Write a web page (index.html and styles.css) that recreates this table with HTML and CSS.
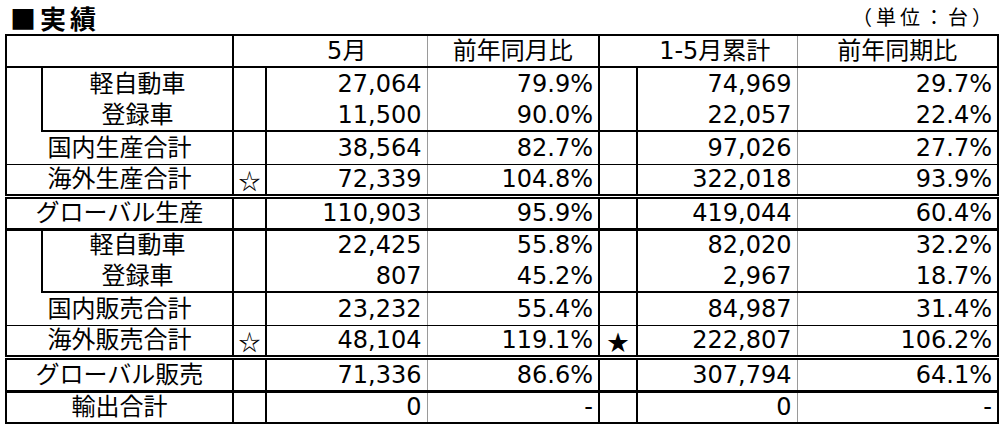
FILE: index.html
```html
<!DOCTYPE html>
<html lang="ja">
<head>
<meta charset="utf-8">
<title>実績</title>
<link rel="stylesheet" href="styles.css">
</head>
<body>
<div class="page">
  <div class="titlebar">
    <h1 class="title">■実績</h1>
    <div class="unit">（単位：台）</div>
  </div>
  <table class="grid">
    <colgroup>
      <col class="w-a"><col class="w-b"><col class="w-c"><col class="w-d">
      <col class="w-e"><col class="w-f"><col class="w-g"><col class="w-h">
    </colgroup>
    <tr class="hd">
      <th colspan="2" class="bk"></th>
      <th colspan="2" class="gr shift">5月</th>
      <th class="bk">前年同月比</th>
      <th colspan="2" class="gr shift">1-5月累計</th>
      <th>前年同期比</th>
    </tr>
    <tr class="r-a">
      <td rowspan="2" class="indent"></td>
      <td class="lbl bk">軽自動車</td>
      <td class="star bk"></td>
      <td class="num gr">27,064</td>
      <td class="num bk">79.9%</td>
      <td class="star bk"></td>
      <td class="num gr">74,969</td>
      <td class="num">29.7%</td>
    </tr>
    <tr class="r-b b-thick">
      <td class="lbl bk">登録車</td>
      <td class="star bk"></td>
      <td class="num gr">11,500</td>
      <td class="num bk">90.0%</td>
      <td class="star bk"></td>
      <td class="num gr">22,057</td>
      <td class="num">22.4%</td>
    </tr>
    <tr class="r-c b-thin">
      <td colspan="2" class="lbl bk">国内生産合計</td>
      <td class="star bk"></td>
      <td class="num gr">38,564</td>
      <td class="num bk">82.7%</td>
      <td class="star bk"></td>
      <td class="num gr">97,026</td>
      <td class="num">27.7%</td>
    </tr>
    <tr class="r-d b-double">
      <td colspan="2" class="lbl bk">海外生産合計</td>
      <td class="star bk">☆</td>
      <td class="num gr">72,339</td>
      <td class="num bk">104.8%</td>
      <td class="star bk"></td>
      <td class="num gr">322,018</td>
      <td class="num">93.9%</td>
    </tr>
    <tr class="r-e b-heavy">
      <td colspan="2" class="lbl bk">グローバル生産</td>
      <td class="star bk"></td>
      <td class="num gr">110,903</td>
      <td class="num bk">95.9%</td>
      <td class="star bk"></td>
      <td class="num gr">419,044</td>
      <td class="num">60.4%</td>
    </tr>
    <tr class="r-f">
      <td rowspan="2" class="indent"></td>
      <td class="lbl bk">軽自動車</td>
      <td class="star bk"></td>
      <td class="num gr">22,425</td>
      <td class="num bk">55.8%</td>
      <td class="star bk"></td>
      <td class="num gr">82,020</td>
      <td class="num">32.2%</td>
    </tr>
    <tr class="r-g b-thick">
      <td class="lbl bk">登録車</td>
      <td class="star bk"></td>
      <td class="num gr">807</td>
      <td class="num bk">45.2%</td>
      <td class="star bk"></td>
      <td class="num gr">2,967</td>
      <td class="num">18.7%</td>
    </tr>
    <tr class="r-h b-thin">
      <td colspan="2" class="lbl bk">国内販売合計</td>
      <td class="star bk"></td>
      <td class="num gr">23,232</td>
      <td class="num bk">55.4%</td>
      <td class="star bk"></td>
      <td class="num gr">84,987</td>
      <td class="num">31.4%</td>
    </tr>
    <tr class="r-i b-double">
      <td colspan="2" class="lbl bk">海外販売合計</td>
      <td class="star bk">☆</td>
      <td class="num gr">48,104</td>
      <td class="num bk">119.1%</td>
      <td class="star bk">★</td>
      <td class="num gr">222,807</td>
      <td class="num">106.2%</td>
    </tr>
    <tr class="r-j b-heavy">
      <td colspan="2" class="lbl bk">グローバル販売</td>
      <td class="star bk"></td>
      <td class="num gr">71,336</td>
      <td class="num bk">86.6%</td>
      <td class="star bk"></td>
      <td class="num gr">307,794</td>
      <td class="num">64.1%</td>
    </tr>
    <tr class="r-k">
      <td colspan="2" class="lbl bk">輸出合計</td>
      <td class="star bk"></td>
      <td class="num gr">0</td>
      <td class="num bk">-</td>
      <td class="star bk"></td>
      <td class="num gr">0</td>
      <td class="num">-</td>
    </tr>
  </table>
</div>
</body>
</html>
```

FILE: styles.css
```css
html, body {
  margin: 0;
  padding: 0;
  background: #fff;
}

body {
  font-family: "DejaVu Sans", "Noto Sans CJK JP", sans-serif;
  color: #000;
}

.page {
  width: 1000px;
  padding-left: 5px;
  box-sizing: border-box;
}

.titlebar {
  display: flex;
  justify-content: space-between;
  align-items: flex-end;
  height: 34px;
  padding-right: 4px;
}

.title {
  margin: 0 0 0 5px;
  font-family: "Noto Sans CJK JP", sans-serif;
  font-weight: 700;
  font-size: 26px;
  line-height: 32px;
  letter-spacing: 4px;
}

.unit {
  font-family: "Noto Sans CJK JP", sans-serif;
  font-size: 20px;
  line-height: 24px;
  letter-spacing: 4px;
  margin-bottom: 5px;
}

.grid {
  border-collapse: collapse;
  table-layout: fixed;
  width: 992px;
  border: 2px solid #000;
  font-size: 24px;
  line-height: 28px;
}

.w-a { width: 36px; }
.w-b { width: 191px; }
.w-c { width: 33px; }
.w-d { width: 161px; }
.w-e { width: 172px; }
.w-f { width: 38px; }
.w-g { width: 160px; }
.w-h { width: 201px; }

.grid th,
.grid td {
  padding: 0 5px;
  vertical-align: middle;
  white-space: nowrap;
  overflow: hidden;
}

.grid th {
  font-weight: 400;
  text-align: center;
}

.grid th.shift {
  padding-left: 38px;
}

.hd th {
  border-bottom: 2px solid #000;
}

.bk { border-right: 2px solid #000; }
.gr { border-right: 1px solid #9a9a9a; }
.indent { border-right: 2px solid #000; }

.lbl { text-align: center; }
.num { text-align: right; }
.star {
  text-align: center;
  padding: 0 !important;
  font-family: "Noto Sans CJK JP", sans-serif;
  font-size: 22px;
}

.b-thick td { border-bottom: 2px solid #000; }
.b-thin td { border-bottom: 1px solid #000; }
.b-double td { border-bottom: 5px double #000; }
.b-heavy td { border-bottom: 3px solid #000; }

.hd { height: 32px; }
.r-a { height: 32px; }
.r-b { height: 32px; }
.r-c { height: 33px; }
.r-d { height: 32px; }
.r-e { height: 33px; }
.r-f { height: 31px; }
.r-g { height: 32px; }
.r-h { height: 33px; }
.r-i { height: 32px; }
.r-j { height: 34px; }
.r-k { height: 32px; }
```
